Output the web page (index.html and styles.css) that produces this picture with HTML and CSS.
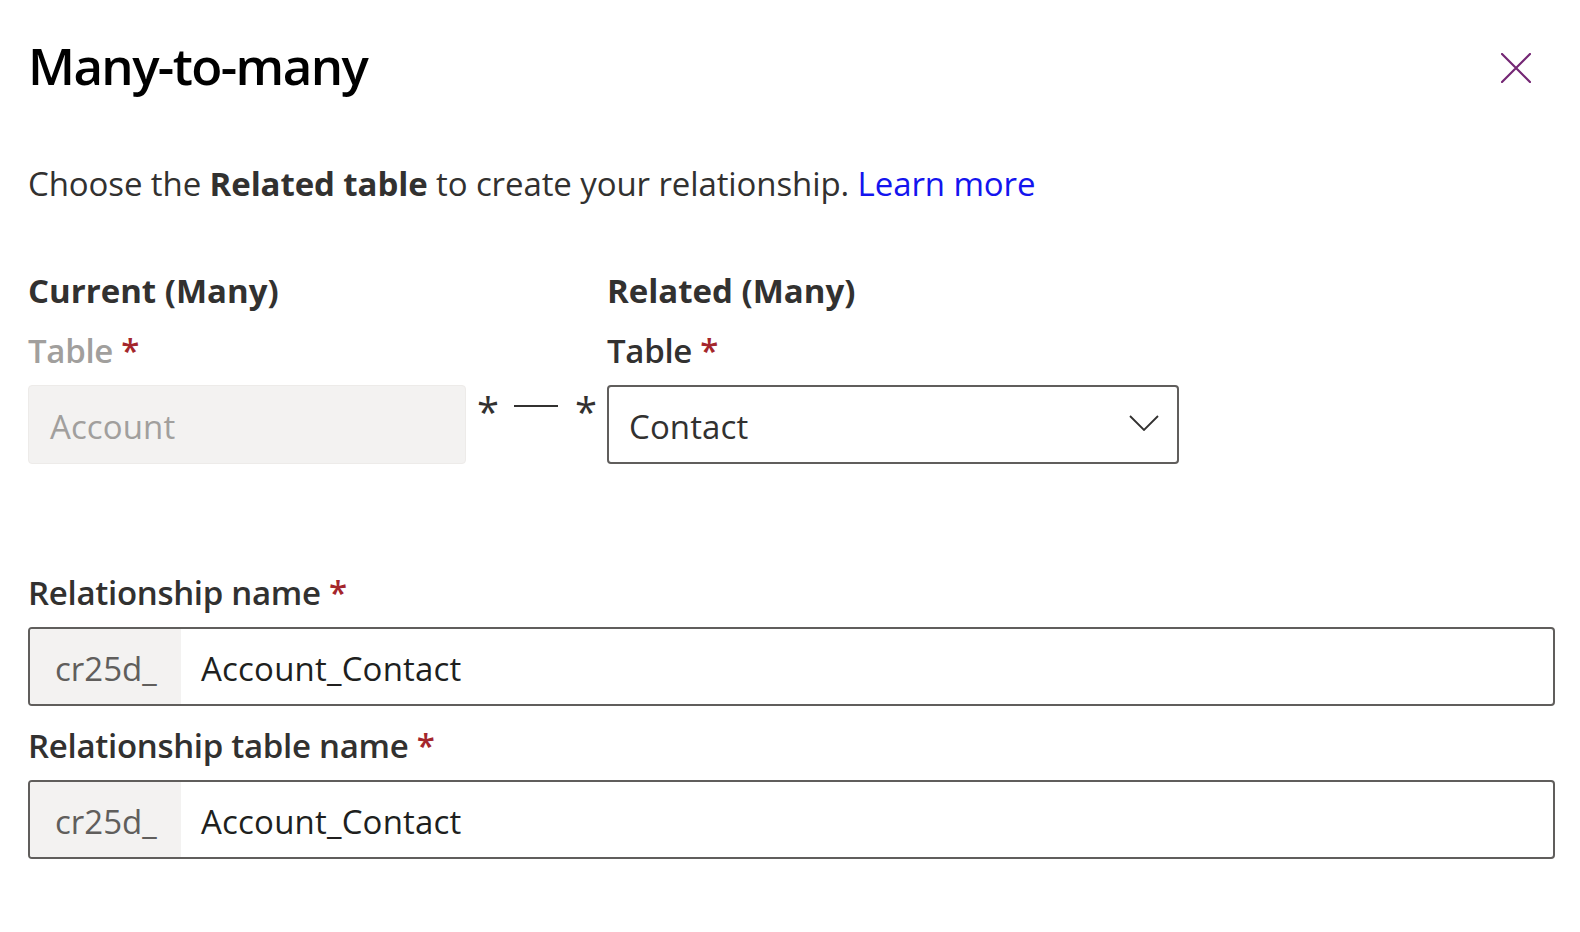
FILE: index.html
```html
<!DOCTYPE html>
<html lang="en">
<head>
<meta charset="utf-8">
<title>Many-to-many</title>
<link rel="stylesheet" href="styles.css">
</head>
<body>
<div class="panel">
  <div class="header">
    <h1 class="title">Many-to-many</h1>
    <button class="close" aria-label="Close">
      <svg width="30" height="30" viewBox="0 0 30 30"><path d="M1 1 L29 29 M29 1 L1 29" stroke="#742774" stroke-width="2.2" fill="none" stroke-linecap="round"/></svg>
    </button>
  </div>
  <p class="desc">Choose the <b>Related table</b> to create your relationship. <a class="link" href="#">Learn more</a></p>

  <div class="tables">
    <div class="col col-left">
      <div class="section">Current (Many)</div>
      <div class="label disabled">Table <span class="req">*</span></div>
      <div class="box box-disabled">Account</div>
    </div>
    <div class="sep">
      <span class="star">*</span>
      <span class="dash"></span>
      <span class="star">*</span>
    </div>
    <div class="col col-right">
      <div class="section">Related (Many)</div>
      <div class="label">Table <span class="req">*</span></div>
      <div class="box box-select">
        <span class="value">Contact</span>
        <svg class="chev" width="30" height="16" viewBox="0 0 30 16"><path d="M1 1 L15 15 L29 1" stroke="#323130" stroke-width="1.8" fill="none"/></svg>
      </div>
    </div>
  </div>

  <div class="field first">
    <div class="label">Relationship name <span class="req">*</span></div>
    <div class="input">
      <span class="prefix">cr25d_</span>
      <span class="value">Account_Contact</span>
    </div>
  </div>
  <div class="field second">
    <div class="label">Relationship table name <span class="req">*</span></div>
    <div class="input">
      <span class="prefix">cr25d_</span>
      <span class="value">Account_Contact</span>
    </div>
  </div>
</div>
</body>
</html>
```
FILE: styles.css
```css
* { box-sizing: border-box; }
html, body { margin: 0; padding: 0; background: #ffffff; }
body {
  font-family: "Open Sans", "Noto Sans", sans-serif;
  color: #323130;
  font-size: 33px;
  line-height: 44px;
}
.panel {
  padding: 33px 25px 0 28px;
  display: flex;
  flex-direction: column;
}
.header {
  display: flex;
  align-items: center;
  justify-content: space-between;
  padding-right: 24px;
}
.title {
  margin: 0;
  font-size: 51px;
  line-height: 64px;
  font-weight: 600;
  color: #000000;
  letter-spacing: -1.6px;
}
.close {
  border: 0;
  background: transparent;
  padding: 0;
  width: 30px;
  height: 30px;
  display: flex;
  margin-top: 6px;
}
.desc {
  margin: 65px 0 0 0;
  letter-spacing: -0.1px;
}
.desc b { font-weight: 700; }
.link { color: #1414ee; text-decoration: none; }
.tables {
  display: flex;
  margin-top: 63px;
}
.col { display: flex; flex-direction: column; }
.col-left { width: 438px; }
.col-right { width: 572px; }
.section { font-weight: 700; letter-spacing: 0; }
.label { font-weight: 600; margin-top: 16px; letter-spacing: -0.3px; }
.label.disabled { color: #a19f9d; }
.req { color: #a4262c; }
.box {
  margin-top: 12px;
  height: 79px;
  border-radius: 4px;
  display: flex;
  align-items: center;
  letter-spacing: 0.1px;
}
.box-disabled {
  background: #f3f2f1;
  border: 1px solid #edebe9;
  color: #a19f9d;
  padding-left: 21px;
  padding-top: 4px;
}
.box-select {
  border: 2px solid #605e5c;
  padding: 4px 18px 0 20px;
  justify-content: space-between;
}
.box-select .chev { margin-top: -8px; }
.sep {
  width: 141px;
  display: flex;
  align-items: flex-start;
  justify-content: flex-start;
  gap: 17px;
  padding-top: 123px;
  padding-left: 11px;
}
.star {
  width: 20px;
  text-align: center;
  font-size: 40px;
  line-height: 40px;
}
.dash {
  width: 44px;
  height: 2px;
  background: #323130;
  margin-top: 13px;
}
.field { display: flex; flex-direction: column; }
.field.first { margin-top: 107px; }
.field.second { margin-top: 18px; }
.field .label { margin-top: 0; }
.input {
  margin-top: 12px;
  height: 79px;
  border: 2px solid #605e5c;
  border-radius: 4px;
  display: flex;
  overflow: hidden;
}
.prefix {
  width: 151px;
  flex: none;
  background: #f3f2f1;
  color: #605e5c;
  padding-left: 25px;
  display: flex;
  align-items: center;
  padding-top: 4px;
}
.input .value {
  padding-left: 20px;
  display: flex;
  align-items: center;
  padding-top: 4px;
  color: #201f1e;
  letter-spacing: 0.2px;
}
```
